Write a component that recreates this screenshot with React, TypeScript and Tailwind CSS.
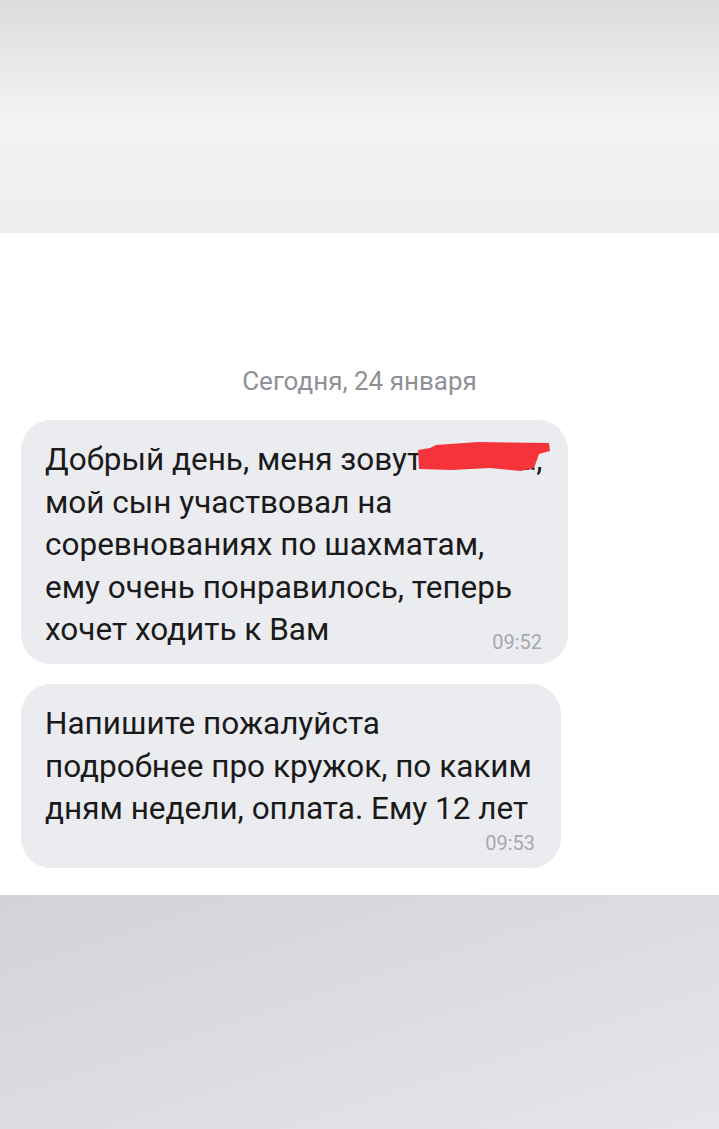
export default function App() {
  return (
    <div className="w-[719px] h-[1129px] flex flex-col font-['Roboto',sans-serif] overflow-hidden">
      <div className="h-[233px] bg-linear-to-b from-[#dcdcdd] via-[#f3f3f3] to-[#efedee]" />

      <div className="h-[662px] bg-white flex flex-col">
        <div className="mt-[133px] text-center text-[26px] leading-[30px] text-[#8e9196]">
          Сегодня, 24 января
        </div>

        <div className="relative mt-[24px] ml-[21px] w-[547px] h-[244px] rounded-[30px] bg-[#ebecf0] px-[24px] pt-[19px] text-[31.5px] leading-[42.5px] text-[#1a1a1a]">
          <div className="whitespace-nowrap">
            Добрый день, меня зовут<span className="inline-block w-[97px]" />а,
          </div>
          <div className="whitespace-nowrap">мой сын участвовал на</div>
          <div className="whitespace-nowrap">соревнованиях по шахматам,</div>
          <div className="whitespace-nowrap">ему очень понравилось, теперь</div>
          <div className="flex items-end justify-between whitespace-nowrap">
            <span>хочет ходить к Вам</span>
            <span className="text-[20px] leading-[24px] text-[#a7a9ad] translate-y-[2px] mr-[2px]">
              09:52
            </span>
          </div>
          <svg
            className="absolute left-[397px] top-[21px]"
            width="134"
            height="32"
            viewBox="0 0 134 32"
          >
            <path
              d="M18 4 L60 1 L131 2 L132 10 L121 13 L116 27 L103 30 L72 27 L34 29 L1 28 L0 9 L12 7 Z"
              fill="#f5333a"
            />
          </svg>
        </div>

        <div className="mt-[20px] ml-[21px] w-[540px] h-[184px] rounded-[30px] bg-[#ebecf0] px-[24px] pt-[19px] text-[31.5px] leading-[42.5px] text-[#1a1a1a]">
          <div className="whitespace-nowrap">Напишите пожалуйста</div>
          <div className="whitespace-nowrap">подробнее про кружок, по каким</div>
          <div className="whitespace-nowrap">дням недели, оплата. Ему 12 лет</div>
          <div className="flex justify-end">
            <span className="text-[20px] leading-[24px] text-[#a7a9ad] mr-[2px]">09:53</span>
          </div>
        </div>
      </div>

      <div className="flex-1 bg-linear-to-br from-[#d1d3d7] to-[#e5e6ea]" />
    </div>
  );
}
